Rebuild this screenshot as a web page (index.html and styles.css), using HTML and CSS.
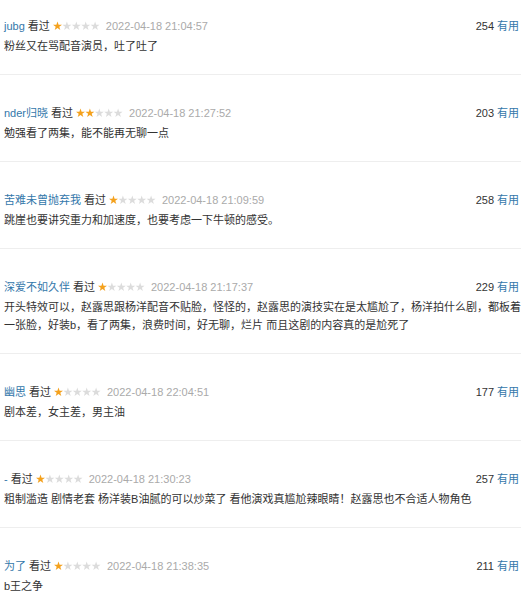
FILE: index.html
```html
<!DOCTYPE html>
<html lang="zh-CN">

<head>
    <meta charset="UTF-8">
    <meta name="viewport" content="width=device-width, initial-scale=1.0">
    <title>短评</title>
    <link rel="stylesheet" href="styles.css">
</head>

<body>
    <svg width="0" height="0" class="defs">
        <defs>
            <path id="star" d="M4.5 0 L5.6 3.2 L9 3.3 L6.3 5.3 L7.3 8.6 L4.5 6.6 L1.7 8.6 L2.7 5.3 L0 3.3 L3.4 3.2 Z" />
        </defs>
    </svg>

    <div class="comments">
        <div class="comment">
            <div class="info">
                <span class="meta">
                    <a class="user">jubg</a>
                    <span class="seen">看过</span>
                    <span class="stars" data-rate="1"></span>
                    <span class="time">2022-04-18 21:04:57</span>
                </span>
                <span class="vote"><span class="num">254</span><a>有用</a></span>
            </div>
            <p class="text">粉丝又在骂配音演员，吐了吐了</p>
        </div>

        <div class="comment">
            <div class="info">
                <span class="meta">
                    <a class="user">nder归晓</a>
                    <span class="seen">看过</span>
                    <span class="stars" data-rate="2"></span>
                    <span class="time">2022-04-18 21:27:52</span>
                </span>
                <span class="vote"><span class="num">203</span><a>有用</a></span>
            </div>
            <p class="text">勉强看了两集，能不能再无聊一点</p>
        </div>

        <div class="comment">
            <div class="info">
                <span class="meta">
                    <a class="user">苦难未曾抛弃我</a>
                    <span class="seen">看过</span>
                    <span class="stars" data-rate="1"></span>
                    <span class="time">2022-04-18 21:09:59</span>
                </span>
                <span class="vote"><span class="num">258</span><a>有用</a></span>
            </div>
            <p class="text">跳崖也要讲究重力和加速度，也要考虑一下牛顿的感受。</p>
        </div>

        <div class="comment">
            <div class="info">
                <span class="meta">
                    <a class="user">深爱不如久伴</a>
                    <span class="seen">看过</span>
                    <span class="stars" data-rate="1"></span>
                    <span class="time">2022-04-18 21:17:37</span>
                </span>
                <span class="vote"><span class="num">229</span><a>有用</a></span>
            </div>
            <p class="text">开头特效可以，赵露思跟杨洋配音不贴脸，怪怪的，赵露思的演技实在是太尴尬了，杨洋拍什么剧，都板着一张脸，好装b，看了两集，浪费时间，好无聊，烂片 而且这剧的内容真的是尬死了</p>
        </div>

        <div class="comment">
            <div class="info">
                <span class="meta">
                    <a class="user">幽思</a>
                    <span class="seen">看过</span>
                    <span class="stars" data-rate="1"></span>
                    <span class="time">2022-04-18 22:04:51</span>
                </span>
                <span class="vote"><span class="num">177</span><a>有用</a></span>
            </div>
            <p class="text">剧本差，女主差，男主油</p>
        </div>

        <div class="comment">
            <div class="info">
                <span class="meta">
                    <a class="user">-</a>
                    <span class="seen">看过</span>
                    <span class="stars" data-rate="1"></span>
                    <span class="time">2022-04-18 21:30:23</span>
                </span>
                <span class="vote"><span class="num">257</span><a>有用</a></span>
            </div>
            <p class="text">粗制滥造 剧情老套 杨洋装B油腻的可以炒菜了 看他演戏真尴尬辣眼睛！赵露思也不合适人物角色</p>
        </div>

        <div class="comment">
            <div class="info">
                <span class="meta">
                    <a class="user">为了</a>
                    <span class="seen">看过</span>
                    <span class="stars" data-rate="1"></span>
                    <span class="time">2022-04-18 21:38:35</span>
                </span>
                <span class="vote"><span class="num">211</span><a>有用</a></span>
            </div>
            <p class="text">b王之争</p>
        </div>
    </div>

    <script>
        let stars = document.querySelectorAll(".stars");

        stars.forEach((el) => {
            let rate = Number(el.dataset.rate);
            let svg = '<svg width="47" height="10" viewBox="0 0 47 10">';
            for (let i = 0; i < 5; i++) {
                let color = i < rate ? "#f4a11d" : "#dcdcdc";
                svg += `<use href="#star" x="${i * 9.4}" y="0.5" fill="${color}" />`;
            }
            svg += "</svg>";
            el.innerHTML = svg;
        });
    </script>
</body>

</html>
```

FILE: styles.css
```css
* {
    padding: 0;
    margin: 0;
    box-sizing: border-box;
}

body {
    background: #fff;
    font-family: "Liberation Sans", "Noto Sans CJK SC", sans-serif;
    font-size: 11px;
    color: #333;
}

.defs {
    position: absolute;
}

.comments {
    width: 521px;
}

.comment {
    padding: 27px 0 19px 4px;
    border-bottom: 1px solid #eeeeee;
}

.comment:first-child {
    padding-top: 15px;
}

.comment:last-child {
    border-bottom: none;
}

.info {
    display: flex;
    justify-content: space-between;
    align-items: center;
    height: 22px;
    line-height: 16px;
    padding-right: 2px;
}

.meta {
    display: flex;
    align-items: center;
    gap: 3px;
}

.user {
    color: #37a;
}

.seen {
    color: #333;
}

.stars {
    display: flex;
    margin-right: 3px;
}

.time {
    color: #aaa;
}

.vote {
    display: flex;
    align-items: center;
    gap: 3px;
}

.vote a {
    color: #37a;
}

.text {
    line-height: 18px;
    color: #333;
}
```
